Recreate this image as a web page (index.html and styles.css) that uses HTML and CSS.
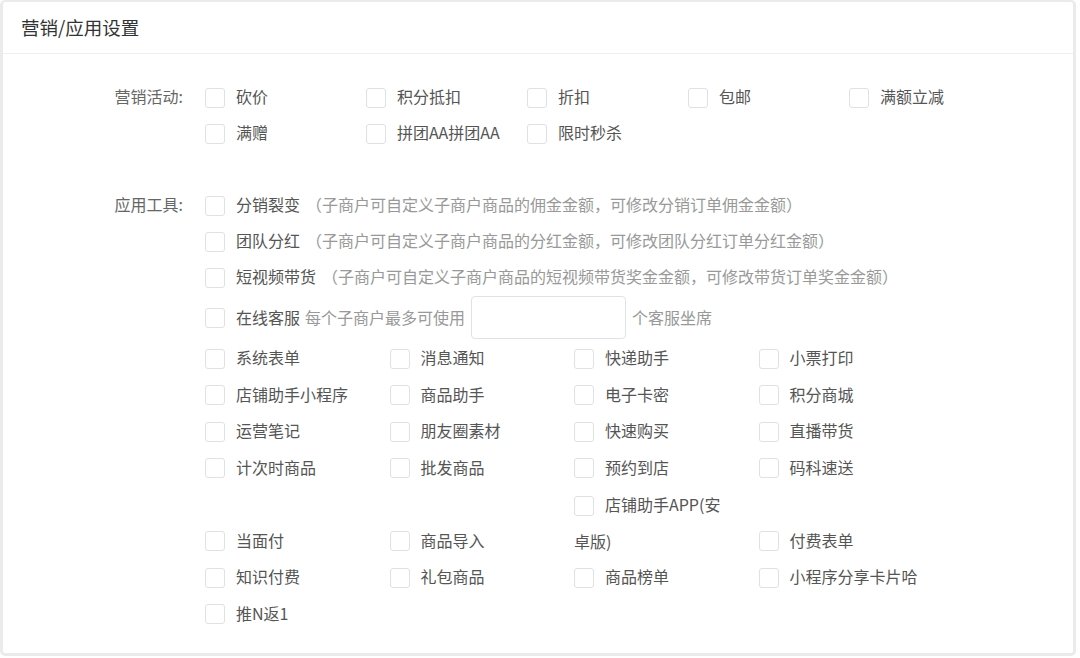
FILE: index.html
```html
<!DOCTYPE html>
<html lang="zh-CN">
<head>
  <meta charset="UTF-8">
  <meta name="viewport" content="width=device-width, initial-scale=1.0">
  <title>营销/应用设置</title>
  <link rel="stylesheet" href="styles.css">
</head>
<body>
  <div class="card">
    <div class="card-header">营销/应用设置</div>
    <div class="card-body">
      <div class="form-row">
        <div class="form-label">营销活动:</div>
        <div class="market-grid">
          <label class="check"><span class="box"></span>砍价</label>
          <label class="check"><span class="box"></span>积分抵扣</label>
          <label class="check"><span class="box"></span>折扣</label>
          <label class="check"><span class="box"></span>包邮</label>
          <label class="check"><span class="box"></span>满额立减</label>
          <label class="check"><span class="box"></span>满赠</label>
          <label class="check"><span class="box"></span>拼团AA拼团AA</label>
          <label class="check"><span class="box"></span>限时秒杀</label>
        </div>
      </div>

      <div class="form-row tools">
        <div class="form-label">应用工具:</div>
        <div class="form-control">
          <label class="check"><span class="box"></span>分销裂变<span class="hint desc">（子商户可自定义子商户商品的佣金金额，可修改分销订单佣金金额）</span></label>
          <label class="check"><span class="box"></span>团队分红<span class="hint desc">（子商户可自定义子商户商品的分红金额，可修改团队分红订单分红金额）</span></label>
          <label class="check"><span class="box"></span>短视频带货<span class="hint desc">（子商户可自定义子商户商品的短视频带货奖金金额，可修改带货订单奖金金额）</span></label>
          <div class="check online">
            <span class="box"></span>在线客服<span class="hint seat-text">每个子商户最多可使用</span>
            <input type="text" class="seat-input">
            <span class="hint">个客服坐席</span>
          </div>
          <div class="tool-grid">
            <label class="check"><span class="box"></span>系统表单</label>
            <label class="check"><span class="box"></span>消息通知</label>
            <label class="check"><span class="box"></span>快递助手</label>
            <label class="check"><span class="box"></span>小票打印</label>
            <label class="check"><span class="box"></span>店铺助手小程序</label>
            <label class="check"><span class="box"></span>商品助手</label>
            <label class="check"><span class="box"></span>电子卡密</label>
            <label class="check"><span class="box"></span>积分商城</label>
            <label class="check"><span class="box"></span>运营笔记</label>
            <label class="check"><span class="box"></span>朋友圈素材</label>
            <label class="check"><span class="box"></span>快速购买</label>
            <label class="check"><span class="box"></span>直播带货</label>
            <label class="check"><span class="box"></span>计次时商品</label>
            <label class="check"><span class="box"></span>批发商品</label>
            <label class="check"><span class="box"></span>预约到店</label>
            <label class="check"><span class="box"></span>码科速送</label>
            <label class="check tall"><span class="box"></span>店铺助手APP(安卓版)</label>
            <label class="check first-col"><span class="box"></span>当面付</label>
            <label class="check"><span class="box"></span>商品导入</label>
            <label class="check"><span class="box"></span>付费表单</label>
            <label class="check"><span class="box"></span>知识付费</label>
            <label class="check"><span class="box"></span>礼包商品</label>
            <label class="check"><span class="box"></span>商品榜单</label>
            <label class="check"><span class="box"></span>小程序分享卡片哈</label>
            <label class="check"><span class="box"></span>推N返1</label>
          </div>
        </div>
      </div>
    </div>
  </div>
</body>
</html>
```
FILE: styles.css
```css
* {
  box-sizing: border-box;
}
body {
  margin: 0;
  background-color: #fff;
  font-family: "Noto Sans CJK SC", "Noto Sans", sans-serif;
  font-size: 16px;
  color: #555;
}
.card {
  width: 1076px;
  height: 656px;
  border: 3px solid #ebebeb;
  border-top-width: 2px;
  border-radius: 5px;
  background-color: #fff;
}
.card-header {
  height: 52px;
  line-height: 51px;
  padding-left: 18px;
  font-size: 18.5px;
  color: #333;
  border-bottom: 1px solid #efefef;
}
.card-body {
  padding: 25px 0 21px;
}
.form-row {
  display: flex;
}
.form-row.tools {
  margin-top: 36px;
}
.form-label {
  width: 180px;
  margin-right: 22px;
  text-align: right;
  line-height: 35px;
  color: #666;
}
.market-grid {
  display: grid;
  grid-template-columns: repeat(5, 161px);
  grid-auto-rows: 36px;
}
.check {
  display: block;
  line-height: 35px;
  padding-bottom: 1px;
  white-space: nowrap;
}
.box {
  display: inline-block;
  width: 20px;
  height: 20px;
  margin-right: 11px;
  border: 1px solid #dfe1e6;
  border-radius: 3px;
  background-color: #fff;
  vertical-align: middle;
  position: relative;
  top: -1px;
}
.hint {
  color: #999;
}
.hint.desc {
  margin-left: 6px;
}
.check.online {
  display: flex;
  align-items: center;
  height: 45px;
  padding-bottom: 0;
}
.check.online .box {
  top: 0;
}
.seat-text {
  margin-left: 5px;
}
.seat-input {
  width: 155px;
  height: 43px;
  margin: 0 6px;
  border: 1px solid #e0e2e6;
  border-radius: 4px;
  font-size: 16px;
  outline: none;
}
.tool-grid {
  display: grid;
  grid-template-columns: repeat(4, 184.5px);
  grid-auto-rows: 36.5px;
}
.tool-grid .check {
  line-height: 35.5px;
}
.check.tall {
  grid-column: 3;
  grid-row: span 2;
  width: 155px;
  white-space: normal;
  line-height: 36.5px;
  padding-bottom: 0;
}
.check.first-col {
  grid-column: 1;
}
```
